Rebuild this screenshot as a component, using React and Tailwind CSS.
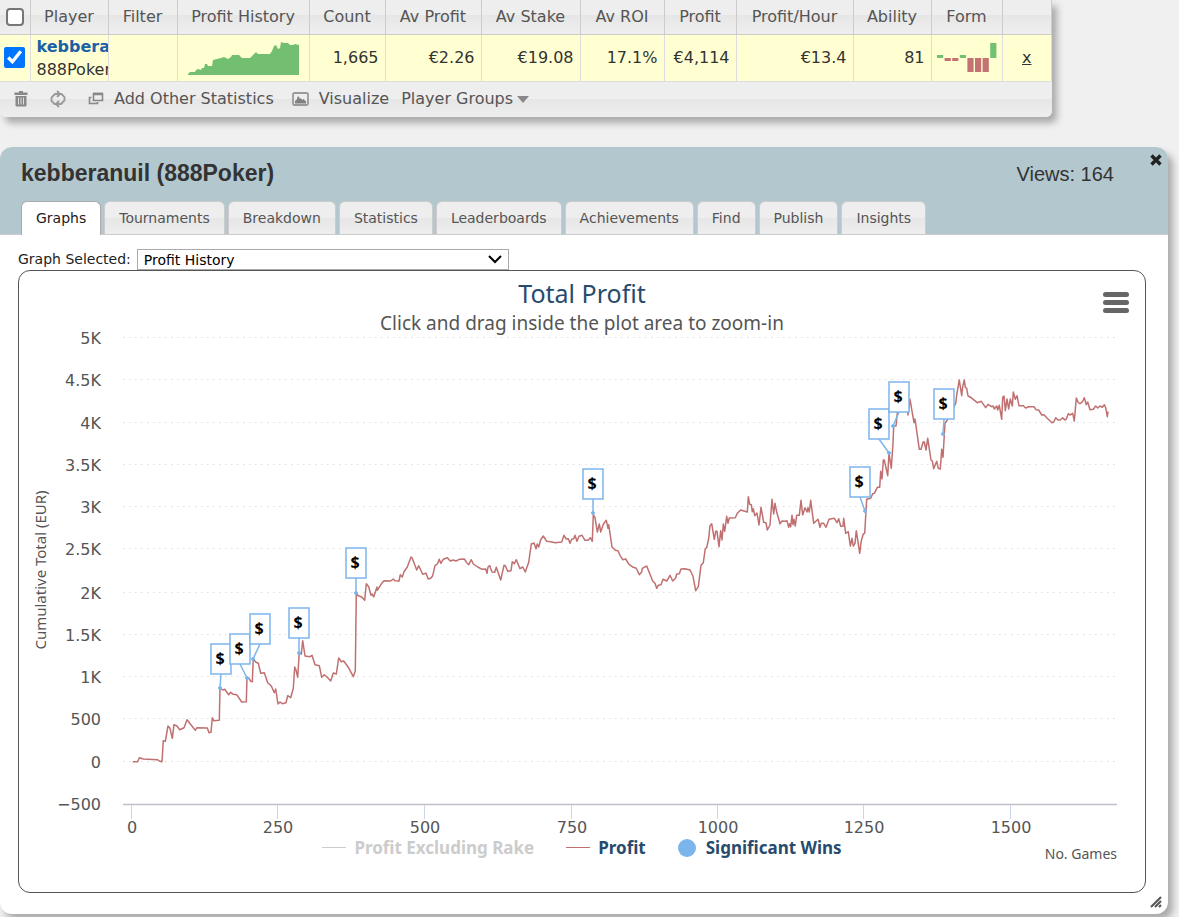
const TABS = [
  'Graphs',
  'Tournaments',
  'Breakdown',
  'Statistics',
  'Leaderboards',
  'Achievements',
  'Find',
  'Publish',
  'Insights',
]

const COLUMNS = [
  { label: 'Player', width: 78 },
  { label: 'Filter', width: 69 },
  { label: 'Profit History', width: 132 },
  { label: 'Count', width: 76 },
  { label: 'Av Profit', width: 96 },
  { label: 'Av Stake', width: 99 },
  { label: 'Av ROI', width: 84 },
  { label: 'Profit', width: 72 },
  { label: 'Profit/Hour', width: 117 },
  { label: 'Ability', width: 78 },
  { label: 'Form', width: 71 },
]

const FORM = [3, -3, -3, 3, -14, -14, -14, 15]

const Y_TICKS = [
  ['5K', 338],
  ['4.5K', 380],
  ['4K', 423],
  ['3.5K', 465],
  ['3K', 507],
  ['2.5K', 549],
  ['2K', 593],
  ['1.5K', 635],
  ['1K', 677],
  ['500', 719],
  ['0', 762],
]

const X_TICKS = [
  ['0', 131],
  ['250', 277],
  ['500', 424],
  ['750', 571],
  ['1000', 717],
  ['1250', 863],
  ['1500', 1010],
]

// Series chunks: points are stored in thirds of a pixel from each origin
const PROFIT = [
  {
    x: 0,
    y: 580,
    points:
      '398,545 413,545 418,533 430,537 472,539 480,544 486,545 490,482 496,484 504,438 510,445 517,475 522,434 530,437 539,449 552,443 561,419 568,428 586,451 591,443 622,444 627,458 633,457 637,413 641,422 658,421 660,324 668,330 674,328 686,344 692,337 700,343 710,344 725,366 739,365 741,294 747,295 752,304 757,305 760,236 768,247 775,250 782,280 793,278 803,308 814,318 823,338 827,327 834,372 840,366 847,371 858,368 863,347 872,353 880,325 884,261 888,270 893,292 898,215 904,223 908,182 915,228 930,230 936,226 945,254 958,257 965,292 973,284 983,293 992,303 1000,279 1009,282 1016,234 1024,245 1031,243 1045,262 1060,290 1066,272',
  },
  {
    x: 300,
    y: 480,
    points:
      '169,340 175,347 185,351 194,361 199,311 206,320 213,346 217,342 221,351 231,321 232,331 245,310 252,302 272,303 280,297 285,302 297,303 301,284 307,291 312,275 322,261 333,231 337,235 350,270 356,257 368,283 378,280 385,297 392,295 398,287 405,257 412,252 418,238 422,250 430,238 442,233 451,243 460,240 468,243 478,238 493,237 500,248 506,254 514,239 520,252 533,261 547,268 557,267 561,280 564,261 569,257 576,276 584,277 589,262 602,300 612,256 616,257 623,274 633,272 637,245 643,251 649,239 660,266 668,261 676,276 686,247 694,192 702,189 708,206 712,192 716,201 722,179 730,168 740,184 752,185 766,188 785,186 792,166 799,177 805,176 810,190 815,178 821,176 825,166 831,184 837,169 846,166 855,181 864,181 871,173 877,184 880,104 885,112 892,156 898,132 902,156 910,133 919,121 924,145 926,134 936,201 946,211 954,212',
  },
  {
    x: 620,
    y: 480,
    points:
      '0,226 8,239 17,237 27,253 40,262 49,265 58,284 65,276 67,265 80,258 98,303 105,310 110,325 115,316 123,314 129,298 140,303 150,286 158,303 167,294 170,282 178,281 183,267 195,266 210,270 219,289 227,332 235,320 243,256 250,248 256,206 260,203 266,175 270,137 275,131 283,178 287,154 291,154 297,200 302,152 306,180 310,132 314,154 320,109 324,130 328,114 346,113 352,100 362,90 382,96 385,50 389,73 394,74 397,95 400,86 404,107 411,99 417,135 423,82 431,127 438,128 442,150 450,135 456,58 461,102 465,70 470,96 480,131 486,123 495,124 501,122 506,142 509,131 512,140 516,106 519,134 522,118 526,138 530,106 538,106 543,61 548,105 555,83 561,96 564,83 568,96 572,61 581,130 594,118 600,142 604,130 611,130 618,142 627,118 643,115 651,128 656,116 662,139 669,139 671,115 677,160 685,155 691,198 696,175 700,198 705,190 709,152 719,220 724,182 730,162 734,160',
  },
  {
    x: 840,
    y: 360,
    points:
      '78,453 80,418 92,415 98,401 103,400 112,382 119,382 122,334 126,357 130,300 133,300 143,347 147,280 154,325 159,250 161,198 168,198 172,160 178,110 190,80 200,110 204,165 210,118 222,188 225,177 238,268 243,268 250,245 253,246 258,270 263,235 273,300 277,303 281,326 290,304 295,325 301,327 305,268 309,292 315,190 322,180 342,140 347,130 350,105 358,60 365,107 368,80 373,60 376,82 380,85 384,108 392,112 412,128 424,124 437,143 444,133 455,140 460,138 463,147 470,138 473,150 478,136 485,178 488,112 492,108 496,152 501,117 506,147 511,117 517,138 520,96 526,118 531,107 537,137 550,137 557,144 566,140 582,140 588,149 596,150 605,165 612,164 620,173 636,188 641,186 647,173 654,180 661,180 668,173 674,180 679,177 685,161 690,165 698,160 703,183 709,114 715,128 720,131 727,126 733,113 739,134 743,126 750,149 760,148 767,138 773,144 780,138 787,142 793,134 797,143 802,170 804,155',
  },
]

const profitLine = PROFIT.flatMap(({ x, y, points }) =>
  points.split(' ').map((pair) => {
    const [px, py] = pair.split(',').map(Number)
    return `${(x + px / 3).toFixed(1)},${(y + py / 3).toFixed(1)}`
  })
).join(' ')

const WINS = [
  { x: 211, y: 644, px: 220, py: 688 },
  { x: 230, y: 634, px: 247, py: 678 },
  { x: 250, y: 614, px: 253, py: 659 },
  { x: 289, y: 608, px: 299, py: 653 },
  { x: 346, y: 548, px: 356, py: 593 },
  { x: 583, y: 469, px: 593, py: 513 },
  { x: 850, y: 467, px: 865, py: 511 },
  { x: 869, y: 409, px: 889, py: 453 },
  { x: 889, y: 382, px: 893, py: 426 },
  { x: 934, y: 389, px: 943, py: 434 },
]

function TrashIcon() {
  return (
    <svg width="14" height="16" viewBox="0 0 14 16" fill="#888">
      <path d="M5 0h4v1.500h4.500v2.500h-13V1.500H5z" />
      <path d="M1.500 5h11v9.500l-1 1h-9l-1-1z" />
      <path d="M4.500 6.500v7M7 6.500v7M9.500 6.500v7" stroke="#ddd" />
    </svg>
  )
}

function RefreshIcon() {
  return (
    <svg width="16" height="18" viewBox="0 0 16 18" fill="none" stroke="#999" strokeWidth="1.800">
      <path d="M6 14H4.500L1.500 11V7.500L5 4H9.500" />
      <path d="M7 1L10 4L7 7" />
      <path d="M10 4H11.500L14.500 7V10.500L11 14H6.500" />
      <path d="M9 11L6 14L9 17" />
    </svg>
  )
}

function WindowsIcon() {
  return (
    <svg width="16" height="14" viewBox="0 0 16 14" fill="none" stroke="#888">
      <path d="M5.500 1.500h9v7h-9z" strokeWidth="1.600" />
      <path d="M5 2h10" strokeWidth="2.600" />
      <path d="M3.500 5.500h-2v6h8v-1.500" strokeWidth="1.600" />
    </svg>
  )
}

function PictureIcon() {
  return (
    <svg width="17" height="14" viewBox="0 0 17 14">
      <rect x="1" y="1" width="15" height="12" rx="1.500" fill="none" stroke="#999" strokeWidth="1.800" />
      <path d="M3 11.500V9l1.500-1L6 4l1 1 1 2 1-1 1 2 1.500-1L14 9.500v2z" fill="#808080" />
    </svg>
  )
}

function Sparkline() {
  return (
    <svg className="ml-2 block" width="115" height="36" viewBox="186 39 115 36" aria-hidden="true">
      <polygon
        fill="#72bf72"
        points="188,74 188,73 190,71 195,71 196,69 198,68 201,69 202,67 204,67 205,63 207,63 208,65 212,65 213,59 217,58 221,57 224,56 228,58 231,56 232,54 239,54 242,57 250,57 253,54 256,51 258,53 270,53 272,50 274,45 276,44 278,48 280,47 281,41 284,42 288,42 290,44 293,44 295,43 299,44 299,74"
      />
    </svg>
  )
}

function FormBars() {
  return (
    <svg className="mx-auto block" width="60" height="32" viewBox="0 0 60 32" aria-hidden="true">
      {FORM.map((value, i) => (
        <rect
          key={i}
          x={i * 7.6}
          y={value > 0 ? 16 - value : 16}
          width="6.2"
          height={Math.abs(value)}
          fill={value > 0 ? '#72c072' : '#c57272'}
        />
      ))}
    </svg>
  )
}

function PlayerTable() {
  return (
    <div className="w-[1052px] overflow-hidden rounded-b-md bg-[#eee] text-[#555] shadow-[5px_6px_7px_#aaa]">
      <table className="w-full table-fixed border-collapse">
        <colgroup>
          <col className="w-[30px]" />
          {COLUMNS.map((c) => (
            <col key={c.label} style={{ width: c.width }} />
          ))}
          <col />
        </colgroup>
        <thead>
          <tr className="h-[34px] border-b border-[#ccc] bg-[linear-gradient(#eee_45%,#e6e6e6_45%,#eee)]">
            <th className="border-r border-[#ccc] p-0">
              <input
                type="checkbox"
                aria-label="Select all players"
                className="mx-auto block size-[18px] appearance-none rounded border-2 border-[#767676] bg-white"
              />
            </th>
            {COLUMNS.map((c) => (
              <th key={c.label} className="border-r border-[#ccc] p-0 font-normal whitespace-nowrap">
                {c.label}
              </th>
            ))}
            <th className="border-r border-[#ccc] p-0" aria-label="Remove" />
          </tr>
        </thead>
        <tbody>
          <tr className="h-[46px] border-b border-[#ddd] bg-[#ffffd2] text-right text-[#333] *:border-r *:border-[#ddd] *:px-1.5 *:py-0">
            <td className="!px-0">
              <input
                type="checkbox"
                defaultChecked
                aria-label="Select kebberanuil"
                className="ml-1 block size-[21px] accent-[#0075ff]"
              />
            </td>
            <td className="overflow-hidden text-left leading-[23px]">
              <a href="#player" className="block font-bold text-[#1c60a8]">
                kebbera
              </a>
              <span className="block">888Poker</span>
            </td>
            <td />
            <td className="!px-0">
              <Sparkline />
            </td>
            <td>1,665</td>
            <td>€2.26</td>
            <td>€19.08</td>
            <td>17.1%</td>
            <td>€4,114</td>
            <td>€13.4</td>
            <td>81</td>
            <td className="!px-0">
              <FormBars />
            </td>
            <td className="text-center">
              <a href="#remove" className="underline">
                x
              </a>
            </td>
          </tr>
        </tbody>
      </table>
      <div className="flex h-[35px] items-center bg-[linear-gradient(#eee_48%,#e6e6e6_48%,#eee)] pl-3.5">
        <button type="button" aria-label="Delete">
          <TrashIcon />
        </button>
        <button type="button" aria-label="Refresh" className="ml-[22px]">
          <RefreshIcon />
        </button>
        <button type="button" className="ml-[22px] flex items-center gap-2.5">
          <WindowsIcon />
          Add Other Statistics
        </button>
        <button type="button" className="ml-[18px] flex items-center gap-2.5">
          <PictureIcon />
          Visualize
        </button>
        <button type="button" className="ml-3 flex items-center gap-1">
          Player Groups
          <svg width="12" height="7" viewBox="0 0 12 7" fill="#888">
            <path d="M0 0h12L6 7z" />
          </svg>
        </button>
      </div>
    </div>
  )
}

function Plot() {
  return (
    <svg
      className="block w-full overflow-visible font-['DejaVu_Sans',sans-serif] text-base"
      viewBox="19 336 1126 500"
      fill="#555"
    >
      {Y_TICKS.map(([label, y]) => (
        <g key={label}>
          <line x1="123" x2="1117" y1={y - 0.5} y2={y - 0.5} stroke="#ddd" strokeDasharray="1.500 4.500" />
          <text x="101" y={y + 6} textAnchor="end">
            {label}
          </text>
        </g>
      ))}
      <text x="101" y="810" textAnchor="end">
        −500
      </text>
      <text
        transform="translate(46 570) rotate(-90)"
        textAnchor="middle"
        className="font-['Noto_Sans',sans-serif] text-[15px]"
      >
        Cumulative Total (EUR)
      </text>
      <line x1="123" x2="1117" y1="804.5" y2="804.5" stroke="#c0c0c8" strokeWidth="1.500" />
      {X_TICKS.map(([label, x]) => (
        <g key={label}>
          <line x1={x + 0.5} x2={x + 0.5} y1="805" y2="819" stroke="#ccd6eb" />
          <text x={x + 1} y="833" textAnchor="middle">
            {label}
          </text>
        </g>
      ))}
      <polyline points={profitLine} fill="none" stroke="#c07070" strokeWidth="1.500" strokeLinejoin="round" />
      {WINS.map((w) => (
        <g key={w.px} stroke="#7cb5ec">
          <line x1={w.x + 10} y1={w.y + 30} x2={w.px} y2={w.py} strokeWidth="1.500" />
          <circle cx={w.px} cy={w.py} r="1.500" fill="#7cb5ec" />
          <rect x={w.x} y={w.y} width="20" height="30" fill="#fff" strokeWidth="1.500" />
          <text
            x={w.x + 9}
            y={w.y + 20}
            textAnchor="middle"
            stroke="none"
            fill="#000"
            className="font-['Noto_Sans',sans-serif] text-base font-bold"
          >
            $
          </text>
        </g>
      ))}
    </svg>
  )
}

function Chart() {
  return (
    <section className="relative rounded-xl border border-[#555] bg-white pt-1.5 pb-7 font-['Noto_Sans',sans-serif] text-[#555]">
      <h2 className="mb-0.5 text-center text-[25px] leading-8 text-[#274b6d]">Total Profit</h2>
      <p className="text-center text-[19px] leading-[25px]">Click and drag inside the plot area to zoom-in</p>
      <button type="button" aria-label="Chart menu" className="absolute top-[21px] right-4 grid gap-[3px]">
        <span className="h-[5px] w-[26px] rounded-sm bg-[#666]" />
        <span className="h-[5px] w-[26px] rounded-sm bg-[#666]" />
        <span className="h-[5px] w-[26px] rounded-sm bg-[#666]" />
      </button>
      <Plot />
      <div className="grid grid-cols-[1fr_auto_1fr] items-start px-7 text-[17px] leading-6 font-bold text-[#274b6d]">
        <div className="col-start-2 flex gap-8">
          <button type="button" className="flex items-center gap-2 text-[#ccc]">
            <span className="h-px w-6 bg-[#ccc]" />
            Profit Excluding Rake
          </button>
          <button type="button" className="flex items-center gap-2">
            <span className="h-px w-6 bg-[#c07070]" />
            Profit
          </button>
          <button type="button" className="flex items-center gap-2.5">
            <span className="size-[18px] rounded-full bg-[#7cb5ec]" />
            Significant Wins
          </button>
        </div>
        <span className="justify-self-end pt-2 text-sm font-normal text-[#555]">No. Games</span>
      </div>
    </section>
  )
}

function PlayerPanel() {
  return (
    <div className="relative mt-[30px] mr-[11px] rounded-xl bg-white text-sm shadow-[5px_6px_7px_#aaa]">
      <header className="rounded-t-xl border-b border-[#ccc] bg-[#b3c7ce] pl-[21px] font-['Liberation_Sans',sans-serif] text-[#333]">
        <div className="flex h-[54px] items-center justify-between pr-[54px]">
          <h1 className="text-[23px] font-bold">kebberanuil (888Poker)</h1>
          <span className="text-xl">Views: 164</span>
        </div>
        <nav className="-mb-px flex gap-[3px] font-['DejaVu_Sans',sans-serif]">
          {TABS.map((tab, i) => (
            <a
              key={tab}
              href={`#${tab.toLowerCase()}`}
              className={
                i === 0
                  ? 'h-[34px] rounded-t-md border border-b-0 border-[#aaa] bg-white px-3.5 leading-8 text-[#212121]'
                  : 'h-[34px] rounded-t-md border border-[#ccc] bg-[linear-gradient(#eee_50%,#e6e6e6_50%,#eee)] px-3.5 leading-8 text-[#555]'
              }
            >
              {tab}
            </a>
          ))}
        </nav>
      </header>
      <button type="button" aria-label="Close" className="absolute top-[7px] right-1.5">
        <svg width="12" height="12" viewBox="0 0 12 12" stroke="#222" strokeWidth="3.400">
          <path d="M1.500 1.500l9 9M10.500 1.500l-9 9" />
        </svg>
      </button>
      <div className="pt-3.5 pr-[22px] pb-[21px] pl-[18px]">
        <div className="flex items-center gap-1.5 text-[#222]">
          <label htmlFor="graph">Graph Selected:</label>
          <div className="relative w-[372px]">
            <select
              id="graph"
              className="block h-[21px] w-full appearance-none border border-[#aaa] bg-white pl-1.5 text-black"
            >
              <option>Profit History</option>
            </select>
            <svg
              className="pointer-events-none absolute top-1.5 right-[7px]"
              width="14"
              height="9"
              viewBox="0 0 14 9"
              fill="none"
              stroke="#000"
              strokeWidth="2"
            >
              <path d="M1 1l6 6 6-6" />
            </svg>
          </div>
        </div>
        <Chart />
      </div>
      <svg
        className="absolute right-1.5 bottom-1.5"
        width="12"
        height="12"
        viewBox="0 0 12 12"
        stroke="#555"
        strokeWidth="2"
        aria-hidden="true"
      >
        <path d="M1 11L11 1M5 11L11 5M9 11L11 9" />
      </svg>
    </div>
  )
}

export default function App() {
  return (
    <main className="min-h-screen overflow-hidden bg-[#f0f0f0] font-['DejaVu_Sans',sans-serif] text-base">
      <PlayerTable />
      <PlayerPanel />
    </main>
  )
}
